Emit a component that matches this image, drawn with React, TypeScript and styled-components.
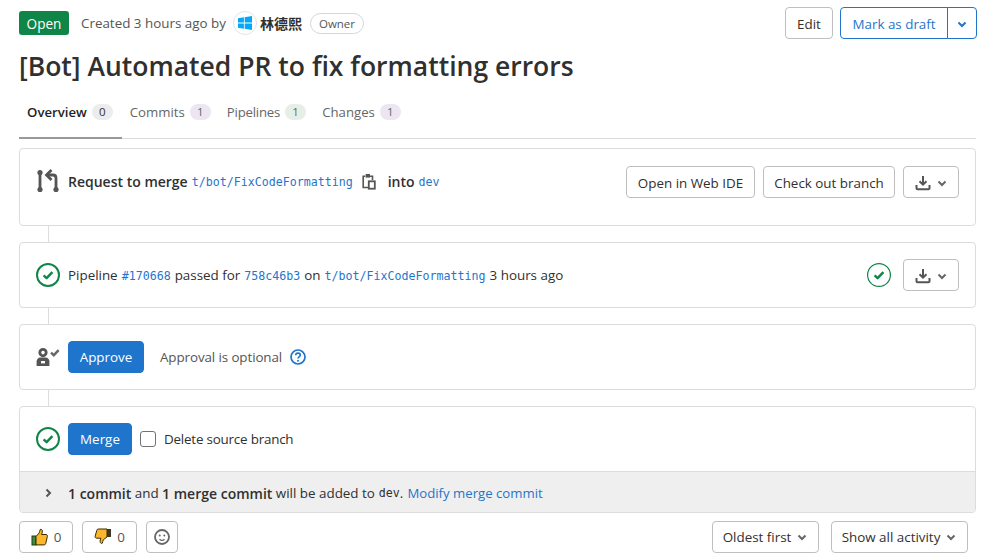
import React from "react";
import styled, { createGlobalStyle } from "styled-components";

const GlobalStyle = createGlobalStyle`
  html, body {
    margin: 0;
    background: #fff;
    color: #303030;
    font-family: "Open Sans", "Noto Sans CJK SC", sans-serif;
    font-size: 13.4px;
  }
  * { box-sizing: border-box; }
`;

const Check = ({ thin = false }: { thin?: boolean }) => (
  <svg width="24" height="24" viewBox="0 0 24 24" fill="none">
    <circle cx="12" cy="12" r={thin ? 11.4 : 11} stroke="#108548" strokeWidth={thin ? 1.2 : 2} />
    <path d="M7.6 12.4l3 2.8 5.8-6" stroke="#108548" strokeWidth="2.4" strokeLinejoin="round" />
  </svg>
);

const Chevron = ({ color = "#666", width = 2 }: { color?: string; width?: number }) => (
  <svg width="12" height="12" viewBox="0 0 12 12" fill="none">
    <path d="M2.5 4.5L6 8l3.5-3.5" stroke={color} strokeWidth={width} />
  </svg>
);

const DownloadIcon = () => (
  <svg width="16" height="16" viewBox="0 0 16 16" fill="none">
    <path d="M8 1v8M4.5 6.2L8 9.7l3.5-3.5" stroke="#555" strokeWidth="2" />
    <path d="M1.5 10v3.2c0 .6.4 1 1 1h11c.6 0 1-.4 1-1V10" stroke="#555" strokeWidth="2" />
  </svg>
);

const MergeIcon = () => (
  <svg width="24" height="24" viewBox="0 0 24 24" fill="none">
    <circle cx="4" cy="3.5" r="2.6" fill="#555" />
    <circle cx="4" cy="20.5" r="2.6" fill="#555" />
    <circle cx="20" cy="20.5" r="2.6" fill="#555" />
    <path d="M4 4v16" stroke="#555" strokeWidth="2.8" />
    <path d="M20 20V9c0-2-1-3-3-3h-5" stroke="#555" strokeWidth="2.8" />
    <path d="M15.5 1l-5 5 5 5" stroke="#555" strokeWidth="2.8" />
  </svg>
);

const CopyIcon = () => (
  <svg width="14" height="17" viewBox="0 0 14 17" fill="none">
    <path d="M6 14.5H1.2V3.2h2M8 3.2h2.5V7" stroke="#555" strokeWidth="1.6" />
    <rect x="3.6" y="1" width="4.4" height="3.6" fill="#555" />
    <rect x="6.8" y="8.3" width="6" height="7.4" stroke="#555" strokeWidth="1.8" />
  </svg>
);

const ApprovalIcon = () => (
  <svg width="26" height="18" viewBox="0 0 26 18" fill="none">
    <circle cx="7" cy="4.6" r="3.2" stroke="#555" strokeWidth="2.8" />
    <path d="M0.6 18v-4.5c0-2.2 1.6-4 3.8-4h5.2c2.2 0 3.8 1.8 3.8 4V18z" fill="#555" />
    <rect x="5" y="13" width="4" height="2.4" fill="#fff" />
    <path d="M15 4.6l2.8 2.6 4.8-5" stroke="#666" strokeWidth="2.4" />
  </svg>
);

const HelpIcon = () => (
  <svg width="16" height="16" viewBox="0 0 16 16" fill="none">
    <circle cx="8" cy="8" r="7" stroke="#1f75cb" strokeWidth="1.7" />
    <path d="M5.7 6.3c0-1.4 1-2.2 2.3-2.2s2.3.8 2.3 2c0 1.8-2.3 1.8-2.3 3.5" stroke="#1f75cb" strokeWidth="1.6" />
    <circle cx="8" cy="11.7" r="1" fill="#1f75cb" />
  </svg>
);

const SmileIcon = () => (
  <svg width="16" height="16" viewBox="0 0 16 16" fill="none">
    <circle cx="8" cy="8" r="7" stroke="#666" strokeWidth="1.8" />
    <circle cx="5.7" cy="6.6" r="1" fill="#666" />
    <circle cx="10.3" cy="6.6" r="1" fill="#666" />
    <path d="M5.5 10.2c1.4 1.3 3.6 1.3 5 0" stroke="#666" strokeWidth="1.4" />
  </svg>
);

const ThumbUp = () => (
  <svg width="18" height="18" viewBox="0 0 18 18">
    <rect x="1" y="8" width="4" height="9" fill="#3e8e41" stroke="#1c3c1c" strokeWidth="1" />
    <path d="M5 8.5l3.2-3.6c.6-1 .6-2.4 1-3.4.9-.6 2 .2 2.2 1.4.2 1.3-.5 2.6-.9 3.6h4.6c1.2 0 1.6 1.2 1.2 2.2l-1.5 6.6c-.2 1-.8 1.6-1.8 1.6H5z" fill="#fbb72c" stroke="#3a2a05" strokeWidth="1" />
  </svg>
);

const ThumbDown = () => (
  <svg width="18" height="18" viewBox="0 0 18 18">
    <rect x="13" y="1" width="4" height="8" fill="#3e3a20" />
    <path d="M13 1H4.5C3.5 1 3 1.5 2.8 2.4L1.2 8c-.3 1 .2 2.2 1.3 2.2h4.4c-.4 1-1 2.4-.8 3.6.2 1.2 1.3 2 2.2 1.4.4-1 .4-2.4 1-3.4L13 9z" fill="#fbb72c" stroke="#3a2a05" strokeWidth="1" />
  </svg>
);

const WindowsLogo = () => (
  <svg width="14" height="14" viewBox="0 0 14 14">
    <path d="M0 2.2l5.9-.9v5.3H0zM6.7 1.2L14 0v6.6H6.7zM0 7.4h5.9v5.3L0 11.8zM6.7 7.4H14V14l-7.3-1.2z" fill="#03a9f4" />
  </svg>
);

const Page = styled.div`
  width: 993px;
  height: 560px;
  overflow: hidden;
  padding: 7px 17px 0 19px;
`;

const HeaderRow = styled.div`
  display: flex;
  align-items: center;
  height: 32px;
  margin-right: -1px;
`;

const StatusBadge = styled.span`
  display: flex;
  align-items: center;
  justify-content: center;
  width: 50px;
  height: 24px;
  border-radius: 3px;
  background: #108548;
  color: #fff;
  font-size: 13.6px;
`;

const Meta = styled.span`
  margin-left: 12px;
  color: #555;
`;

const Avatar = styled.span`
  display: flex;
  align-items: center;
  justify-content: center;
  width: 24px;
  height: 24px;
  margin-left: 7px;
  border-radius: 50%;
  border: 1px solid #e4e4e4;
`;

const AuthorName = styled.strong`
  margin-left: 3px;
  font-size: 14px;
  font-weight: 700;
  color: #303030;
`;

const RoleBadge = styled.span`
  display: flex;
  align-items: center;
  height: 21px;
  margin-left: 8px;
  padding: 0 8px;
  border: 1px solid #d6d6d6;
  border-radius: 11px;
  font-size: 11.5px;
  color: #555;
`;

const Spacer = styled.div`
  flex: 1;
`;

const Button = styled.button<{ $width?: number }>`
  display: inline-flex;
  align-items: center;
  justify-content: center;
  gap: 5px;
  height: 32px;
  width: ${({ $width }) => ($width ? `${$width}px` : "auto")};
  padding: 2px 0 0;
  background: #fff;
  border: 1px solid #bfbfbf;
  border-radius: 4px;
  color: #303030;
  font: inherit;
`;

const PrimaryButton = styled(Button)`
  padding-top: 0;
  background: #1f75cb;
  border-color: #1f75cb;
  color: #fff;
`;

const DraftGroup = styled.div`
  display: flex;
  margin-left: 7px;
`;

const DraftButton = styled(Button)`
  border-color: #1f75cb;
  color: #1f75cb;
  border-radius: 4px 0 0 4px;
`;

const DraftToggle = styled(DraftButton)`
  margin-left: -1px;
  border-radius: 0 4px 4px 0;
`;

const Title = styled.h1`
  margin: 7px 0 0;
  font-size: 26.5px;
  line-height: 40px;
  font-weight: 600;
  color: #303030;
`;

const Tabs = styled.div`
  display: flex;
  height: 47px;
  margin-top: 6px;
  border-bottom: 1px solid #dbdbdb;
`;

const Tab = styled.div<{ $active?: boolean }>`
  display: flex;
  align-items: center;
  gap: 5px;
  height: 47px;
  padding: 0 ${({ $active }) => ($active ? 9 : 8)}px 8px 8px;
  font-size: 13.2px;
  color: ${({ $active }) => ($active ? "#1f1f1f" : "#666")};
  font-weight: ${({ $active }) => ($active ? 600 : 400)};
  box-shadow: ${({ $active }) => ($active ? "inset 0 -2px 0 #999" : "none")};
`;

const TabLabel = styled.span<{ $tracking?: number }>`
  letter-spacing: ${({ $tracking }) => $tracking ?? 0}px;
`;

const Count = styled.span<{ $tint?: string; $dark?: boolean }>`
  display: inline-flex;
  align-items: center;
  justify-content: center;
  min-width: 21px;
  height: 16px;
  padding: 0 5px;
  border-radius: 8px;
  background: ${({ $tint }) => $tint || "#ececec"};
  color: ${({ $dark }) => ($dark ? "#303030" : "#666")};
  font-size: 11.5px;
  font-weight: 400;
`;

const Card = styled.div<{ $height: number; $top?: number }>`
  height: ${({ $height }) => $height}px;
  border: 1px solid #dcdcdc;
  border-radius: 4px;
  overflow: hidden;
  margin-top: ${({ $top }) => $top ?? 0}px;
`;

const Connector = styled.div`
  width: 1px;
  height: 16px;
  margin-left: 29px;
  background: #dcdcdc;
`;

const CardRow = styled.div`
  display: flex;
  align-items: center;
  height: 32px;
  margin: 16px 16px 0 16px;
`;

const IconSlot = styled.span`
  display: flex;
  align-items: center;
  width: 32px;
  flex: none;
`;

const StatusSlot = styled.span`
  display: flex;
  margin-right: 4px;
`;

const Strong = styled.strong`
  font-size: 14px;
  font-weight: 600;
`;

const Code = styled.a`
  margin: 0 4px;
  padding-top: 2px;
  font-family: "DejaVu Sans Mono", monospace;
  font-size: 11.64px;
  color: #1f75cb;
`;

const Muted = styled.span`
  margin-left: 16px;
  color: #555;
  letter-spacing: -0.1px;
`;

const ActionGroup = styled.div<{ $drop?: number }>`
  display: flex;
  align-items: center;
  gap: 8px;
  margin-top: ${({ $drop }) => $drop ?? 0}px;
`;

const CopySlot = styled.span`
  display: flex;
  margin: 0 12px 0 5px;
`;

const HelpSlot = styled.span`
  display: flex;
  margin-left: 8px;
`;

const Checkbox = styled.span`
  width: 16px;
  height: 16px;
  margin: 0 8px;
  border: 1px solid #737278;
  border-radius: 3px;
`;

const CheckLabel = styled.span`
  letter-spacing: -0.2px;
`;

const CardFooter = styled.div`
  display: flex;
  align-items: center;
  height: 41px;
  margin-top: 16px;
  padding: 2px 0 0 22px;
  background: #efefef;
  border-top: 1px solid #dcdcdc;
  color: #303030;
`;

const FooterChevron = styled.span`
  display: flex;
  width: 26px;
  transform: rotate(-90deg);
  transform-origin: 6px 6px;
`;

const FooterCode = styled.span`
  margin-left: 4px;
  font-family: "DejaVu Sans Mono", monospace;
  font-size: 11.64px;
`;

const FooterLink = styled.a`
  margin-left: 4px;
  font-size: 13.2px;
  color: #1f75cb;
`;

const ReactionBar = styled.div`
  display: flex;
  align-items: center;
  margin-top: 8px;
  padding-right: 8px;
`;

const ReactionButton = styled(Button)<{ $gap?: number }>`
  padding-top: 0;
  margin-right: ${({ $gap }) => $gap ?? 8}px;
  color: #555;
`;

const SortButton = styled(Button)`
  padding-top: 0;
`;

const SortGroup = styled.div`
  display: flex;
  gap: 12px;
`;

export default function App() {
  return (
    <>
      <GlobalStyle />
      <Page>
        <HeaderRow>
          <StatusBadge>Open</StatusBadge>
          <Meta>Created 3 hours ago by</Meta>
          <Avatar>
            <WindowsLogo />
          </Avatar>
          <AuthorName>林德熙</AuthorName>
          <RoleBadge>Owner</RoleBadge>
          <Spacer />
          <Button $width={48}>Edit</Button>
          <DraftGroup>
            <DraftButton $width={108}>Mark as draft</DraftButton>
            <DraftToggle $width={30}>
              <Chevron color="#1f75cb" />
            </DraftToggle>
          </DraftGroup>
        </HeaderRow>
        <Title>[Bot] Automated PR to fix formatting errors</Title>
        <Tabs>
          <Tab $active>
            <TabLabel>Overview</TabLabel>
            <Count $dark>0</Count>
          </Tab>
          <Tab>
            <TabLabel>Commits</TabLabel>
            <Count $tint="#ece6f2">1</Count>
          </Tab>
          <Tab>
            <TabLabel $tracking={-0.2}>Pipelines</TabLabel>
            <Count $tint="#e6efe6">1</Count>
          </Tab>
          <Tab>
            <TabLabel>Changes</TabLabel>
            <Count $tint="#ece6f2">1</Count>
          </Tab>
        </Tabs>
        <Card $height={78} $top={9}>
          <CardRow>
            <IconSlot>
              <MergeIcon />
            </IconSlot>
            <Strong>Request to merge</Strong>
            <Code>t/bot/FixCodeFormatting</Code>
            <CopySlot>
              <CopyIcon />
            </CopySlot>
            <Strong>into</Strong>
            <Code>dev</Code>
            <Spacer />
            <ActionGroup $drop={2}>
              <Button $width={129}>Open in Web IDE</Button>
              <Button $width={132}>Check out branch</Button>
              <Button $width={56}>
                <DownloadIcon />
                <Chevron />
              </Button>
            </ActionGroup>
          </CardRow>
        </Card>
        <Connector />
        <Card $height={66}>
          <CardRow>
            <IconSlot>
              <Check />
            </IconSlot>
            <span>Pipeline</span>
            <Code>#170668</Code>
            <span>passed for</span>
            <Code>758c46b3</Code>
            <span>on</span>
            <Code>t/bot/FixCodeFormatting</Code>
            <span>3 hours ago</span>
            <Spacer />
            <ActionGroup>
              <StatusSlot>
                <Check thin />
              </StatusSlot>
              <Button $width={56}>
                <DownloadIcon />
                <Chevron />
              </Button>
            </ActionGroup>
          </CardRow>
        </Card>
        <Connector />
        <Card $height={66}>
          <CardRow>
            <IconSlot>
              <ApprovalIcon />
            </IconSlot>
            <PrimaryButton $width={76}>Approve</PrimaryButton>
            <Muted>Approval is optional</Muted>
            <HelpSlot>
              <HelpIcon />
            </HelpSlot>
          </CardRow>
        </Card>
        <Connector />
        <Card $height={107}>
          <CardRow>
            <IconSlot>
              <Check />
            </IconSlot>
            <PrimaryButton $width={64}>Merge</PrimaryButton>
            <Checkbox />
            <CheckLabel>Delete source branch</CheckLabel>
          </CardRow>
          <CardFooter>
            <FooterChevron>
              <Chevron color="#555" />
            </FooterChevron>
            <Strong>1 commit</Strong>&nbsp;and&nbsp;<Strong>1 merge commit</Strong>&nbsp;will be added to
            <FooterCode>dev</FooterCode>.
            <FooterLink>Modify merge commit</FooterLink>
          </CardFooter>
        </Card>
        <ReactionBar>
          <ReactionButton $width={54} $gap={9}>
            <ThumbUp />0
          </ReactionButton>
          <ReactionButton $width={55} $gap={9}>
            <ThumbDown />0
          </ReactionButton>
          <ReactionButton $width={32}>
            <SmileIcon />
          </ReactionButton>
          <Spacer />
          <SortGroup>
            <SortButton $width={107}>
              Oldest first <Chevron />
            </SortButton>
            <SortButton $width={137}>
              Show all activity <Chevron />
            </SortButton>
          </SortGroup>
        </ReactionBar>
      </Page>
    </>
  );
}
